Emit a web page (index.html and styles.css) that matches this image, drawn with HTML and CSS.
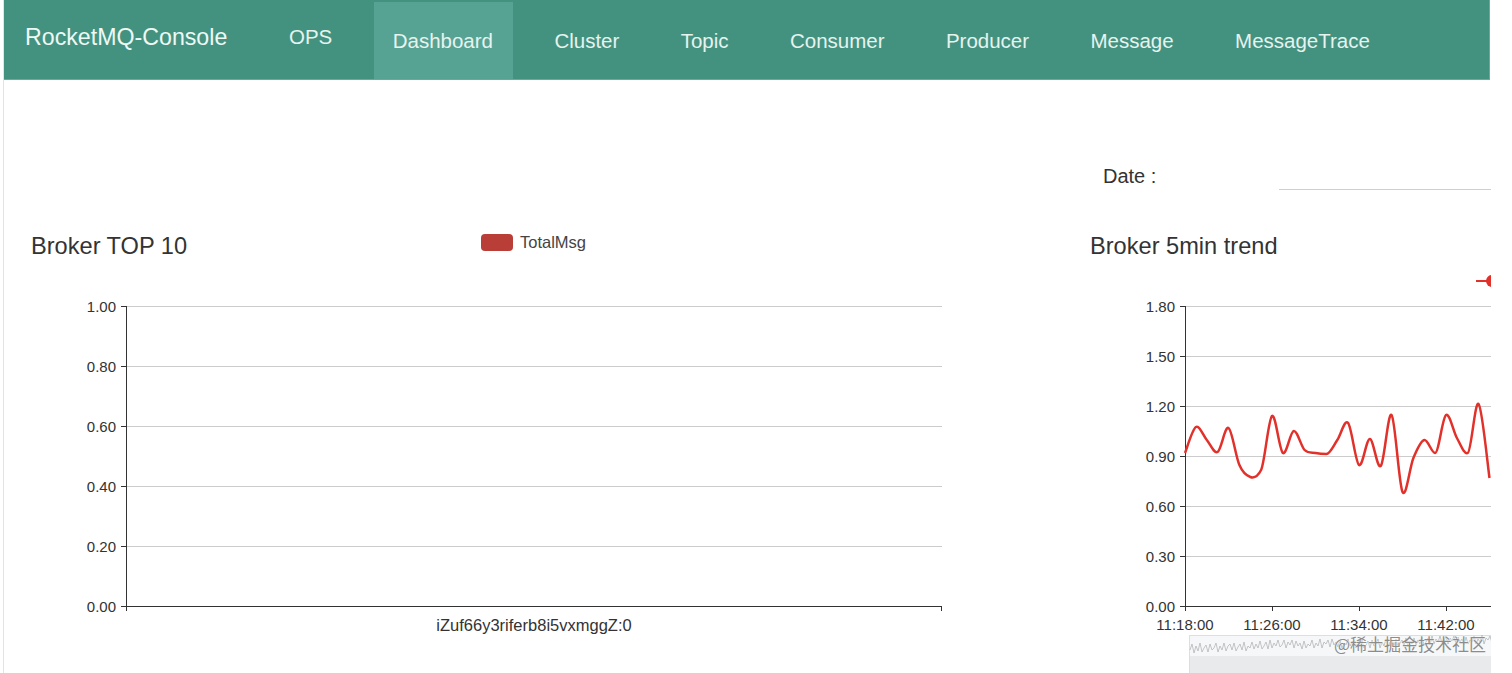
FILE: index.html
```html
<!DOCTYPE html>
<html lang="en">
<head>
<meta charset="utf-8">
<title>RocketMQ-Console</title>
<link rel="stylesheet" href="styles.css">
</head>
<body>
<div class="page">
  <nav class="navbar">
    <a class="brand">RocketMQ-Console</a>
    <ul class="nav-menu">
      <li class="nav-item ops">OPS</li>
      <li class="nav-item active">Dashboard</li>
      <li class="nav-item">Cluster</li>
      <li class="nav-item">Topic</li>
      <li class="nav-item">Consumer</li>
      <li class="nav-item">Producer</li>
      <li class="nav-item">Message</li>
      <li class="nav-item">MessageTrace</li>
    </ul>
  </nav>

  <main class="main">
    <div class="toolbar-left"></div>
    <div class="toolbar-right">
      <label class="date-label">Date :</label>
      <div class="date-input"></div>
    </div>

    <section class="panel panel-left">
      <div class="panel-header">
        <h4 class="panel-title title-left">Broker TOP 10</h4>
        <div class="legend"><span class="legend-swatch"></span><span class="legend-text">TotalMsg</span></div>
      </div>
      <svg class="chart chart-left" width="1071" height="411" viewBox="4 262 1071 411">
        <g class="grid">
          <line x1="126" y1="306.5" x2="942" y2="306.5"/>
          <line x1="126" y1="366.5" x2="942" y2="366.5"/>
          <line x1="126" y1="426.5" x2="942" y2="426.5"/>
          <line x1="126" y1="486.5" x2="942" y2="486.5"/>
          <line x1="126" y1="546.5" x2="942" y2="546.5"/>
        </g>
        <g class="axis">
          <line x1="126.5" y1="306" x2="126.5" y2="606"/>
          <line x1="121" y1="306.5" x2="126" y2="306.5"/>
          <line x1="121" y1="366.5" x2="126" y2="366.5"/>
          <line x1="121" y1="426.5" x2="126" y2="426.5"/>
          <line x1="121" y1="486.5" x2="126" y2="486.5"/>
          <line x1="121" y1="546.5" x2="126" y2="546.5"/>
          <line x1="121" y1="606.5" x2="126" y2="606.5"/>
          <line x1="126" y1="606.5" x2="942" y2="606.5"/>
          <line x1="126.5" y1="606" x2="126.5" y2="611"/>
          <line x1="941.5" y1="606" x2="941.5" y2="611"/>
        </g>
        <g class="ylabels">
          <text x="116" y="311.5">1.00</text>
          <text x="116" y="371.5">0.80</text>
          <text x="116" y="431.5">0.60</text>
          <text x="116" y="491.5">0.40</text>
          <text x="116" y="551.5">0.20</text>
          <text x="116" y="611.5">0.00</text>
        </g>
        <text class="xlabel" x="534" y="631">iZuf66y3riferb8i5vxmggZ:0</text>
      </svg>
    </section>

    <section class="panel panel-right">
      <div class="panel-header">
        <h4 class="panel-title title-right">Broker 5min trend</h4>
      </div>
      <svg class="chart chart-right" width="416" height="411" viewBox="1075 262 416 411">
        <g class="legend-line">
          <line x1="1476" y1="281" x2="1490" y2="281"/>
          <circle cx="1492" cy="281" r="6"/>
        </g>
        <g class="grid">
          <line x1="1185" y1="306.5" x2="1491" y2="306.5"/>
          <line x1="1185" y1="356.5" x2="1491" y2="356.5"/>
          <line x1="1185" y1="406.5" x2="1491" y2="406.5"/>
          <line x1="1185" y1="456.5" x2="1491" y2="456.5"/>
          <line x1="1185" y1="506.5" x2="1491" y2="506.5"/>
          <line x1="1185" y1="556.5" x2="1491" y2="556.5"/>
        </g>
        <g class="axis">
          <line x1="1185.5" y1="306" x2="1185.5" y2="606"/>
          <line x1="1180" y1="306.5" x2="1185" y2="306.5"/>
          <line x1="1180" y1="356.5" x2="1185" y2="356.5"/>
          <line x1="1180" y1="406.5" x2="1185" y2="406.5"/>
          <line x1="1180" y1="456.5" x2="1185" y2="456.5"/>
          <line x1="1180" y1="506.5" x2="1185" y2="506.5"/>
          <line x1="1180" y1="556.5" x2="1185" y2="556.5"/>
          <line x1="1180" y1="606.5" x2="1185" y2="606.5"/>
          <line x1="1185" y1="606.5" x2="1491" y2="606.5"/>
          <line x1="1185.5" y1="606" x2="1185.5" y2="611"/>
          <line x1="1272.5" y1="606" x2="1272.5" y2="611"/>
          <line x1="1359.5" y1="606" x2="1359.5" y2="611"/>
          <line x1="1446.5" y1="606" x2="1446.5" y2="611"/>
        </g>
        <g class="ylabels">
          <text x="1175" y="311.5">1.80</text>
          <text x="1175" y="361.5">1.50</text>
          <text x="1175" y="411.5">1.20</text>
          <text x="1175" y="461.5">0.90</text>
          <text x="1175" y="511.5">0.60</text>
          <text x="1175" y="561.5">0.30</text>
          <text x="1175" y="611.5">0.00</text>
        </g>
        <g class="xlabels">
          <text x="1185" y="630">11:18:00</text>
          <text x="1272" y="630">11:26:00</text>
          <text x="1359" y="630">11:34:00</text>
          <text x="1446" y="630">11:42:00</text>
        </g>
        <path class="series" d="M1185 453 C1186.8 448.7 1192.3 429.2 1195.9 427 S1203.2 435.8 1206.8 440 S1214 454 1217.6 452 S1224.9 425.8 1228.5 428 S1235.8 456.8 1239.4 465 S1246.7 475.7 1250.3 477 S1257.5 477 1261.1 470 S1268.4 418.8 1272 416 S1279.3 450.5 1282.9 453 S1290.2 431.5 1293.8 431 S1301 446.3 1304.6 450 S1311.9 452.3 1315.5 453 S1322.8 454 1326.4 454 S1333.7 445.2 1337.3 440 S1344.5 418.8 1348.1 423 S1355.4 462.3 1359 465 S1366.3 438.8 1369.9 439 S1377.2 470 1380.8 466 S1388 410.7 1391.6 415 S1398.9 484.8 1402.5 492 S1409.8 466.7 1413.4 458 S1420.7 440.8 1424.3 440 S1431.5 453 1435.1 453 S1442.4 417.5 1446 415 S1453.3 431.7 1456.9 438 S1464.2 455 1467.8 453 S1475 399.8 1478.6 404 S1487.7 465.7 1489.5 478"/>
        <g class="datazoom">
          <rect class="dz-bg" x="1189.5" y="635.5" width="310" height="40"/>
          <rect class="dz-fill" x="1190" y="656" width="310" height="20"/>
          <path class="dz-wave" d="M1190 650 l2 -6 l2 9 l2 -7 l2 5 l2 -8 l2 9 l2 -4 l2 -3 l2 7 l2 -8 l2 6 l2 -2 l2 -5 l2 9 l2 -6 l2 4 l2 -7 l2 8 l2 -5 l2 -2 l2 6 l2 -7 l2 8 l2 -4 l2 -3 l2 6 l2 -8 l2 9 l2 -5 l2 2 l2 -6 l2 7 l2 -5 l2 4 l2 -7 l2 8 l2 -3 l2 -4 l2 7 l2 -9 l2 8 l2 -5 l2 3 l2 -6 l2 7 l2 -2 l2 -5 l2 8 l2 -6 l2 3 l2 -5 l2 8 l2 -7 l2 5 l2 -3 l2 6 l2 -8 l2 7 l2 -4 l2 2 l2 -6 l2 8 l2 -5 l2 3 l2 -7 l2 9 l2 -6 l2 2 l2 -4 l2 7 l2 -8 l2 6 l2 -3 l2 5 l2 -7 l2 8 l2 -5 l2 2 l2 -6 l2 7 l2 -4 l2 -2 l2 8 l2 -7 l2 5 l2 -6 l2 8 l2 -3 l2 -4 l2 7 l2 -8 l2 6 l2 -2 l2 -5 l2 9 l2 -6 l2 4 l2 -7 l2 8 l2 -5 l2 -2 l2 6 l2 -7 l2 8 l2 -4 l2 -3 l2 6 l2 -8 l2 9 l2 -5 l2 2 l2 -6 l2 7 l2 -5 l2 4 l2 -7 l2 8 l2 -3 l2 -4 l2 7 l2 -9 l2 8 l2 -5 l2 3 l2 -6 l2 7 l2 -2 l2 -5 l2 8 l2 -6 l2 3 l2 -5 l2 8 l2 -7 l2 5 l2 -3 l2 6 l2 -8 l2 7 l2 -4 l2 2 l2 -6 l2 8 l2 -5 l2 3 l2 -7 l2 9 l2 -6 l2 2 l2 -4 l2 7"/>
        </g>
        <text class="watermark" x="1334" y="651">@稀土掘金技术社区</text>
      </svg>
    </section>
  </main>
</div>
</body>
</html>
```

FILE: styles.css
```css
html, body {
  margin: 0;
  padding: 0;
  background: #ffffff;
}

body {
  font-family: "Liberation Sans", Arial, "Noto Sans CJK SC", sans-serif;
  color: #333333;
}

.page {
  margin-left: 3px;
  width: 1487px;
  height: 673px;
  border-left: 1px solid #e4e4e4;
  overflow: hidden;
}

/* ---------- Navbar ---------- */
.navbar {
  display: flex;
  align-items: stretch;
  width: 1485px;
  height: 79px;
  background: #43927f;
  border-right: 1px solid #6aa99b;
  border-bottom: 1px solid #6aa99b;
}

.brand {
  flex: none;
  width: 244px;
  padding: 0 0 4px 21px;
  display: flex;
  align-items: center;
  font-size: 23.2px;
  color: #eef8f5;
  text-decoration: none;
}

.nav-menu {
  display: flex;
  align-items: stretch;
  gap: 21.4px;
  margin: 2px 0 0 0;
  padding: 0;
  list-style: none;
}

.nav-item {
  display: flex;
  align-items: center;
  padding: 0 20px;
  font-size: 20.5px;
  color: #e6f3ef;
}

.nav-item.ops {
  padding-bottom: 8px;
}

.nav-item.active {
  background: #56a393;
  padding-left: 19px;
  padding-right: 20px;
}

/* ---------- Main ---------- */
.main {
  display: grid;
  grid-template-columns: 1071px 416px;
  grid-template-rows: 136px auto;
}

.toolbar-right {
  display: flex;
  align-items: flex-start;
  padding: 84px 0 0 28px;
}

.date-label {
  flex: none;
  width: 176px;
  font-size: 20px;
  line-height: 24px;
  color: #333333;
}

.date-input {
  flex: 1;
  height: 25px;
  border-bottom: 1px solid #cfcfcf;
}

.panel-header {
  display: flex;
  align-items: flex-start;
  height: 46px;
}

.panel-title {
  margin: 0;
  padding-top: 16px;
  font-size: 23.6px;
  line-height: 28px;
  font-weight: normal;
  color: #333333;
}

.title-left {
  width: 450px;
  padding-left: 27px;
  flex: none;
}

.title-right {
  padding-left: 15px;
}

.legend {
  display: flex;
  align-items: center;
  gap: 7px;
  margin-top: 18px;
}

.legend-swatch {
  width: 32px;
  height: 17px;
  border-radius: 4px;
  background: #b93e38;
}

.legend-text {
  font-size: 16.5px;
  line-height: 17px;
  color: #444444;
}

/* ---------- Charts ---------- */
.chart {
  display: block;
  overflow: hidden;
}

.grid line {
  stroke: #cccccc;
  stroke-width: 1;
}

.axis line {
  stroke: #333333;
  stroke-width: 1;
}

.ylabels text {
  font-family: "Liberation Sans", Arial, sans-serif;
  font-size: 15px;
  fill: #333333;
  text-anchor: end;
}

.xlabels text,
.xlabel {
  font-family: "Liberation Sans", Arial, sans-serif;
  font-size: 15px;
  fill: #333333;
  text-anchor: middle;
}

.xlabel {
  font-size: 16.5px;
}

.series {
  fill: none;
  stroke: #e2302a;
  stroke-width: 2.5;
  stroke-linejoin: round;
}

.legend-line line {
  stroke: #e2302a;
  stroke-width: 2;
}

.legend-line circle {
  fill: #e2302a;
}

.dz-bg {
  fill: #f6f7f8;
  stroke: #dcdfe2;
  stroke-width: 1;
}

.dz-fill {
  fill: #e8eaec;
}

.dz-wave {
  fill: none;
  stroke: #b4b7ba;
  stroke-width: 0.8;
}

.watermark {
  font-family: "Noto Sans CJK SC", sans-serif;
  font-size: 17px;
  fill: #8c8c8c;
  stroke: #ffffff;
  stroke-width: 0.6;
  paint-order: stroke;
}
```
